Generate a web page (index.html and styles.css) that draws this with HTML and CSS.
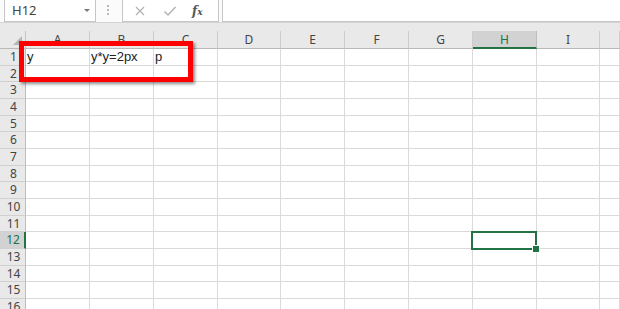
FILE: index.html
```html
<!DOCTYPE html>
<html lang="en">
<head>
    <meta charset="UTF-8">
    <title>Sheet</title>
    <link rel="stylesheet" href="styles.css">
</head>
<body>
    <div class="topBar">
        <div class="nameBox">
            <span class="nameText">H12</span>
            <span class="caret"></span>
        </div>
        <div class="grip"><i></i><i></i><i></i></div>
        <div class="fxBox">
            <svg class="icon" width="12" height="12" viewBox="0 0 12 12">
                <path d="M2 2 L10 10 M10 2 L2 10" stroke="#b3b3b3" stroke-width="1.3" fill="none"/>
            </svg>
            <svg class="icon" width="14" height="12" viewBox="0 0 14 12">
                <path d="M1.5 6.5 L5 10 L12.5 2" stroke="#b3b3b3" stroke-width="1.5" fill="none"/>
            </svg>
            <span class="fx">f<small>x</small></span>
        </div>
        <div class="formula"></div>
    </div>
    <div class="strip"></div>

    <div class="sheet" id="sheet"></div>

    <div class="callout"></div>

    <script>
        const sheet = document.getElementById("sheet")
        const cols = ["A","B","C","D","E","F","G","H","I",""]
        const data = {"A1": "y", "B1": "y*y=2px", "C1": "p"}

        let corner = document.createElement("div")
        corner.className = "corner"
        sheet.appendChild(corner)

        cols.forEach(c => {
            let head = document.createElement("div")
            head.className = c == "H" ? "colHead active" : "colHead"
            head.textContent = c
            sheet.appendChild(head)
        })

        for(let r = 1; r <= 16; r++){
            let rowHead = document.createElement("div")
            rowHead.className = r == 12 ? "rowHead active" : "rowHead"
            rowHead.textContent = r
            sheet.appendChild(rowHead)

            cols.forEach(c => {
                let cell = document.createElement("div")
                cell.className = "cell"
                if(c == "H" && r == 12){
                    cell.className = "cell selected"
                }
                if(data[c + r]){
                    cell.textContent = data[c + r]
                }
                sheet.appendChild(cell)
            })
        }
    </script>
</body>
</html>
```

FILE: styles.css
```css
*{
    margin: 0px;
    box-sizing: border-box;
}
body{
    width: 620px;
    height: 309px;
    overflow: hidden;
    background-color: white;
    font-family: "Noto Sans", "Open Sans", sans-serif;
    position: relative;
}
.topBar{
    display: flex;
    height: 23px;
    background-color: #fbfbfb;
    border-bottom: solid 1px #d4d4d4;
}
.nameBox{
    display: flex;
    align-items: center;
    justify-content: space-between;
    margin-left: 4px;
    width: 92px;
    height: 22px;
    background-color: white;
    border: solid 1px #c6c6c6;
    border-top: none;
    padding: 0 5px 0 7px;
}
.nameText{
    font-size: 13px;
    color: #444;
    margin-top: -1px;
}
.caret{
    width: 0;
    height: 0;
    border-left: 3px solid transparent;
    border-right: 3px solid transparent;
    border-top: 3px solid #7a7a7a;
}
.grip{
    display: flex;
    flex-direction: column;
    justify-content: center;
    gap: 2px;
    width: 26px;
    padding-left: 11px;
    padding-bottom: 2px;
}
.grip i{
    display: block;
    width: 2px;
    height: 2px;
    background-color: #b8b8b8;
}
.fxBox{
    display: flex;
    align-items: center;
    width: 97px;
    height: 22px;
    background-color: white;
    border: solid 1px #c6c6c6;
    border-top: none;
    padding-left: 11px;
    gap: 17px;
}
.icon{
    display: block;
}
.fx{
    font-family: "DejaVu Serif", "Liberation Serif", serif;
    font-style: italic;
    font-weight: bold;
    font-size: 12px;
    color: #555;
    margin-left: -2px;
}
.fx small{
    font-size: 9px;
}
.formula{
    flex: 1;
    margin-left: 3px;
    height: 22px;
    background-color: white;
    border: solid 1px #c6c6c6;
    border-top: none;
    border-right: none;
}
.strip{
    height: 8px;
    background-color: #e9e9e9;
}
.sheet{
    display: grid;
    grid-template-columns: 26px 64px 64px 64px 63px 64px 64px 64px 64px 63px 1fr;
    grid-template-rows: 18px;
    grid-auto-rows: 17px 16px 17px;
}
.corner{
    position: relative;
    background-color: #e9e9e9;
    border-right: solid 1px #c4c4c4;
    border-bottom: solid 1px #b9b9b9;
}
.corner::after{
    content: "";
    position: absolute;
    right: 3px;
    bottom: 3px;
    width: 0;
    height: 0;
    border-left: 9px solid transparent;
    border-bottom: 9px solid #b6b6b6;
}
.colHead{
    background-color: #e9e9e9;
    border-right: solid 1px #cdcdcd;
    border-bottom: solid 1px #b9b9b9;
    font-size: 12px;
    color: #444;
    text-align: center;
    line-height: 17px;
}
.colHead.active{
    background-color: #d2d2d2;
    color: #217346;
    border-bottom: solid 2px #217346;
    border-right-color: #bdbdbd;
}
.rowHead{
    background-color: #e9e9e9;
    border-right: solid 1px #bdbdbd;
    border-bottom: solid 1px #d0d0d0;
    font-size: 12px;
    color: #444;
    text-align: center;
    line-height: 16px;
    padding-left: 2px;
}
.rowHead.active{
    background-color: #d2d2d2;
    color: #217346;
    border-right: solid 2px #217346;
}
.cell{
    border-right: solid 1px #dadada;
    border-bottom: solid 1px #dadada;
    font-family: "Liberation Sans", Arial, sans-serif;
    font-size: 13px;
    color: #222;
    line-height: 16px;
    padding-left: 1px;
    white-space: nowrap;
}
.selected{
    position: relative;
}
.selected::after{
    content: "";
    position: absolute;
    left: -2px;
    top: -1px;
    right: -1px;
    bottom: -2px;
    border: solid 2px #217346;
}
.selected::before{
    content: "";
    position: absolute;
    right: -4px;
    bottom: -5px;
    width: 6px;
    height: 6px;
    background-color: #217346;
    border: solid 1px white;
    z-index: 2;
}
.callout{
    position: absolute;
    left: 19px;
    top: 41px;
    width: 174px;
    height: 41px;
    border: solid 5px #ff0000;
    box-shadow: 2px 2px 3px rgba(0, 0, 0, 0.45);
}
```
